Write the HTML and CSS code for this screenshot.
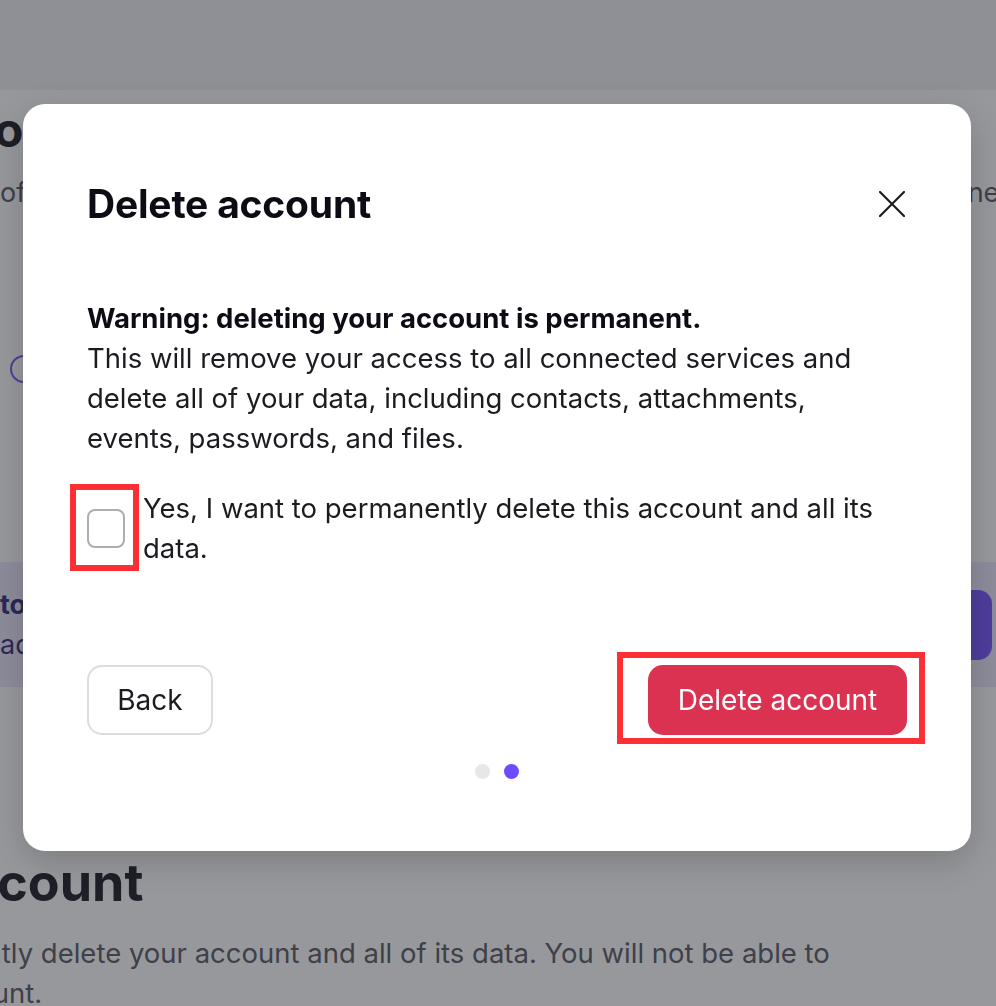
FILE: index.html
```html
<!DOCTYPE html>
<html lang="en">
<head>
<meta charset="utf-8">
<title>Delete account</title>
<link rel="stylesheet" href="styles.css">
</head>
<body>
<div class="page">
  <div class="page-header"></div>
  <h2 class="page-title">op</h2>
  <div class="page-line"><span>of</span><span class="right-frag">nev</span></div>
  <div class="radio-row"><span class="radio"></span></div>
  <div class="band">
    <div class="band-text">
      <div class="band-strong">to</div>
      <div class="band-sub">ad</div>
    </div>
    <div class="band-btn"></div>
  </div>
  <h2 class="page-title del-title">Delete account</h2>
  <p class="page-para">This will permanently delete your account and all of its data. You will not be able to<br>recover your account.</p>
</div>

<div class="overlay">
  <div class="modal" role="dialog" aria-labelledby="dlg-title">
    <div class="modal-head">
      <h1 id="dlg-title" class="modal-title">Delete account</h1>
      <button class="close-btn" aria-label="Close">
        <svg width="26" height="26" viewBox="0 0 26 26" fill="none" stroke="#1d1d22" stroke-width="2.2" stroke-linecap="round"><path d="M1 1 L25 25 M25 1 L1 25"/></svg>
      </button>
    </div>
    <div class="modal-body">
      <p><strong>Warning: deleting your account is permanent.</strong><br>This will remove your access to all connected services and delete all of your data, including contacts, attachments, events, passwords, and files.</p>
    </div>
    <label class="confirm">
      <span class="check-wrap"><span class="check"></span></span>
      <span class="confirm-text">Yes, I want to permanently delete this account and all its data.</span>
    </label>
    <div class="actions">
      <button class="btn btn-back">Back</button>
      <span class="danger-wrap"><button class="btn btn-danger">Delete account</button></span>
    </div>
    <div class="dots"><span class="dot"></span><span class="dot active"></span></div>
  </div>
</div>
</body>
</html>
```
FILE: styles.css
```css
* { box-sizing: border-box; }
html, body { margin: 0; padding: 0; }
body {
  width: 996px;
  height: 1006px;
  overflow: hidden;
  background: #ffffff;
  font-family: Inter, "Noto Sans", "Liberation Sans", sans-serif;
  color: #1b1b20;
}

/* background page */
.page { width: 996px; height: 1006px; overflow: hidden; }
.page-header { height: 90px; background: #efeff2; }
.page-title {
  margin: 12px 0 0 -6px;
  font-size: 48px;
  line-height: 56px;
  font-weight: 700;
  color: #0c0c14;
  white-space: nowrap;
}
.page-line {
  margin-top: 15px;
  display: flex;
  justify-content: space-between;
  font-size: 27px;
  line-height: 40px;
  color: #4e4e56;
  white-space: nowrap;
  margin-right: -18px;
}
.radio-row { margin-top: 142px; height: 28px; padding-left: 10px; }
.radio {
  display: block;
  width: 28px;
  height: 28px;
  border: 2px solid #6d4aff;
  border-radius: 50%;
}
.band {
  margin-top: 179px;
  height: 125px;
  background: #ebe7fd;
  display: flex;
  justify-content: space-between;
  align-items: flex-start;
  padding: 23px 4px 0 0;
}
.band-text { font-size: 27px; line-height: 40px; color: #2a1d74; white-space: nowrap; }
.band-strong { font-weight: 700; }
.band-btn {
  margin-top: 5px;
  width: 160px;
  height: 70px;
  border-radius: 14px;
  background: #6d4aff;
}
.del-title { margin: 166px 0 0 -239px; font-size: 52px; line-height: 60px; }
.page-para {
  margin: 20px 0 0 -243px;
  font-size: 27.5px;
  line-height: 40px;
  color: #4e4e56;
  white-space: nowrap;
}

/* overlay + modal */
.overlay {
  position: fixed;
  inset: 0;
  background: rgba(48, 50, 58, 0.5);
  padding: 104px 25px 0 23px;
}
.modal {
  width: 948px;
  background: #ffffff;
  border-radius: 22px;
  box-shadow: 0 10px 34px rgba(0, 0, 0, 0.18);
  padding: 78px 64px 72px 64px;
}
.modal-head {
  display: flex;
  justify-content: space-between;
  align-items: center;
  height: 44px;
}
.modal-title {
  margin: 0;
  font-size: 39px;
  line-height: 44px;
  font-weight: 700;
  color: #0c0c14;
  letter-spacing: -0.2px;
}
.close-btn {
  width: 30px;
  height: 30px;
  padding: 0;
  border: 0;
  background: none;
  display: flex;
  align-items: center;
  justify-content: center;
}
.modal-body { margin-top: 72px; }
.modal-body p {
  margin: 0;
  font-size: 27.5px;
  line-height: 40px;
  color: #1b1b20;
}
.modal-body strong { font-weight: 700; color: #0c0c14; }

.confirm {
  margin-top: 30px;
  display: flex;
  align-items: center;
  gap: 18px;
}
.check-wrap { position: relative; flex: none; display: block; }
.check {
  display: block;
  width: 38px;
  height: 39px;
  border: 2px solid #adadb0;
  border-radius: 8px;
  background: #fff;
}
.check-wrap::after {
  content: "";
  position: absolute;
  left: -17px;
  right: -14px;
  top: -25px;
  bottom: -23px;
  border: 6px solid #fb3034;
}
.confirm-text {
  font-size: 27.5px;
  line-height: 40px;
  color: #1b1b20;
}

.actions {
  margin-top: 97px;
  display: flex;
  justify-content: space-between;
  align-items: center;
}
.btn {
  height: 70px;
  border-radius: 15px;
  font-family: inherit;
  font-size: 28px;
  padding: 0;
  cursor: pointer;
}
.btn-back {
  width: 126px;
  background: #fff;
  border: 2px solid #dcdcdf;
  color: #1b1b20;
}
.danger-wrap { position: relative; display: block; }
.btn-danger {
  display: block;
  width: 259px;
  background: #dc3251;
  border: 0;
  color: #ffffff;
}
.danger-wrap::after {
  content: "";
  position: absolute;
  left: -31px;
  right: -18px;
  top: -13px;
  bottom: -9px;
  border: 6px solid #fb3034;
}

.dots {
  margin-top: 29px;
  display: flex;
  justify-content: center;
  gap: 14px;
}
.dot {
  width: 15px;
  height: 15px;
  border-radius: 50%;
  background: #e8e6e9;
}
.dot.active { background: #6d4aff; }
```
